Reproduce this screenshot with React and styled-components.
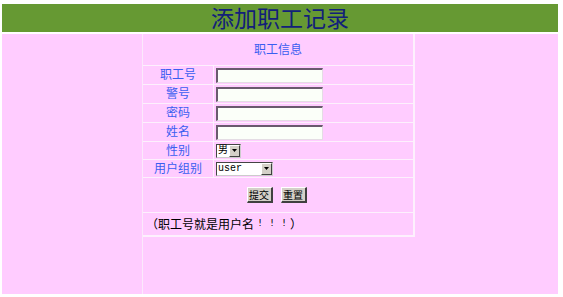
import React from "react";
import styled, { createGlobalStyle } from "styled-components";

const Global = createGlobalStyle`
  html, body { margin: 0; padding: 0; background: #fff; }
  body { font-family: "Noto Sans CJK SC", "Noto Sans", sans-serif; }
`;

const Page = styled.div`
  width: 556px;
  padding: 4px 0 0 2px;
  display: flex;
  flex-direction: column;
  gap: 2px;
`;

const Header = styled.div`
  height: 28px;
  background: #669933;
  color: #12207a;
  font-size: 23px;
  line-height: 26px;
  text-align: center;
`;

const Body = styled.div`
  height: 260px;
  display: grid;
  grid-template-columns: 140px 415px;
  column-gap: 1px;
  background: #fbe9fb;
`;

const Side = styled.div`
  background: #ffccff;
`;

const Main = styled.div`
  background: #ffccff;
  display: flex;
  align-items: flex-start;
`;

const Form = styled.div`
  display: grid;
  grid-template-columns: 70px 199px;
  grid-template-rows: 31px 18px 18px 18px 18px 17px 17px 34px 22px;
  gap: 1px;
  background: #fdf0fd;
  border-right: 2px solid #fdf0fd;
  border-bottom: 2px solid #fdf0fd;
`;

const Cell = styled.div`
  background: #ffccff;
  display: flex;
  align-items: center;
  justify-content: ${(p) => p.$align || "flex-start"};
  grid-column: ${(p) => (p.$span ? "1 / span 2" : "auto")};
  padding-left: ${(p) => p.$pad || 0}px;
  padding-bottom: ${(p) => p.$lift || 0}px;
  font-size: 12px;
  color: ${(p) => p.$color || "#3a5ef0"};
`;

const TextInput = styled.input`
  box-sizing: border-box;
  width: 107px;
  height: 15px;
  margin: 0;
  padding: 0;
  background: #fbfff9;
  border-style: solid;
  border-width: 2px 1px 1px 2px;
  border-color: #6a5a6e #e4dde4 #e4dde4 #6a5a6e;
  outline: none;
`;

const FakeSelect = styled.div`
  box-sizing: border-box;
  width: ${(p) => p.$w}px;
  height: 14px;
  display: flex;
  align-items: center;
  justify-content: space-between;
  background: #fff;
  border-style: solid;
  border-width: 1px;
  border-color: #444 #ccc #ccc #444;
  font-family: "Liberation Mono", "Noto Sans CJK SC", monospace;
  font-size: 10px;
  color: #000;
  line-height: 12px;
  padding-left: 1px;
`;

const Arrow = styled.span`
  box-sizing: border-box;
  width: 11px;
  height: 12px;
  flex: none;
  background: #d4d0c8;
  border-style: solid;
  border-width: 1px;
  border-color: #fff #404040 #404040 #fff;
  display: flex;
  align-items: center;
  justify-content: center;
`;

const Buttons = styled.div`
  display: flex;
  gap: 8px;
  margin-left: -3px;
`;

const Button = styled.button`
  box-sizing: border-box;
  height: 16px;
  width: 26px;
  padding: 0;
  margin: 0;
  background: #d4d0c8;
  border-style: solid;
  border-width: 1px 2px 2px 1px;
  border-color: #fff #404040 #404040 #fff;
  font-family: "Noto Sans CJK SC", sans-serif;
  font-size: 10px;
  line-height: 12px;
  color: #000;
`;

const Note = styled.span`
  color: #000;
  font-size: 12px;
  display: flex;
  align-items: center;
`;

const Bang = styled.span`
  display: inline-block;
  width: 12px;
  text-align: center;
  font-family: "DejaVu Sans", sans-serif;
  font-size: 9px;
  color: #000;
`;

function Select({ w, value }) {
  return (
    <FakeSelect $w={w}>
      <span>{value}</span>
      <Arrow>
        <svg width="5" height="3" viewBox="0 0 5 3">
          <path d="M0 0h5L2.5 3z" fill="#000" />
        </svg>
      </Arrow>
    </FakeSelect>
  );
}

export default function App() {
  const fields = ["职工号", "警号", "密码", "姓名"];
  return (
    <>
      <Global />
      <Page>
        <Header>添加职工记录</Header>
        <Body>
          <Side />
          <Main>
            <Form>
              <Cell $span $align="center" $lift={3}>职工信息</Cell>
              {fields.map((f) => (
                <React.Fragment key={f}>
                  <Cell $align="center" $lift={3}>{f}</Cell>
                  <Cell $pad={2}>
                    <TextInput type="text" />
                  </Cell>
                </React.Fragment>
              ))}
              <Cell $align="center" $lift={3}>性别</Cell>
              <Cell $pad={2}>
                <Select w={25} value="男" />
              </Cell>
              <Cell $align="center" $lift={3}>用户组别</Cell>
              <Cell $pad={2}>
                <Select w={57} value="user" />
              </Cell>
              <Cell $span $align="center">
                <Buttons>
                  <Button>提交</Button>
                  <Button>重置</Button>
                </Buttons>
              </Cell>
              <Cell $span $pad={3} $lift={2}>
                <Note>
                  （职工号就是用户名
                  <Bang>!</Bang>
                  <Bang>!</Bang>
                  <Bang>!</Bang>）
                </Note>
              </Cell>
            </Form>
          </Main>
        </Body>
      </Page>
    </>
  );
}
